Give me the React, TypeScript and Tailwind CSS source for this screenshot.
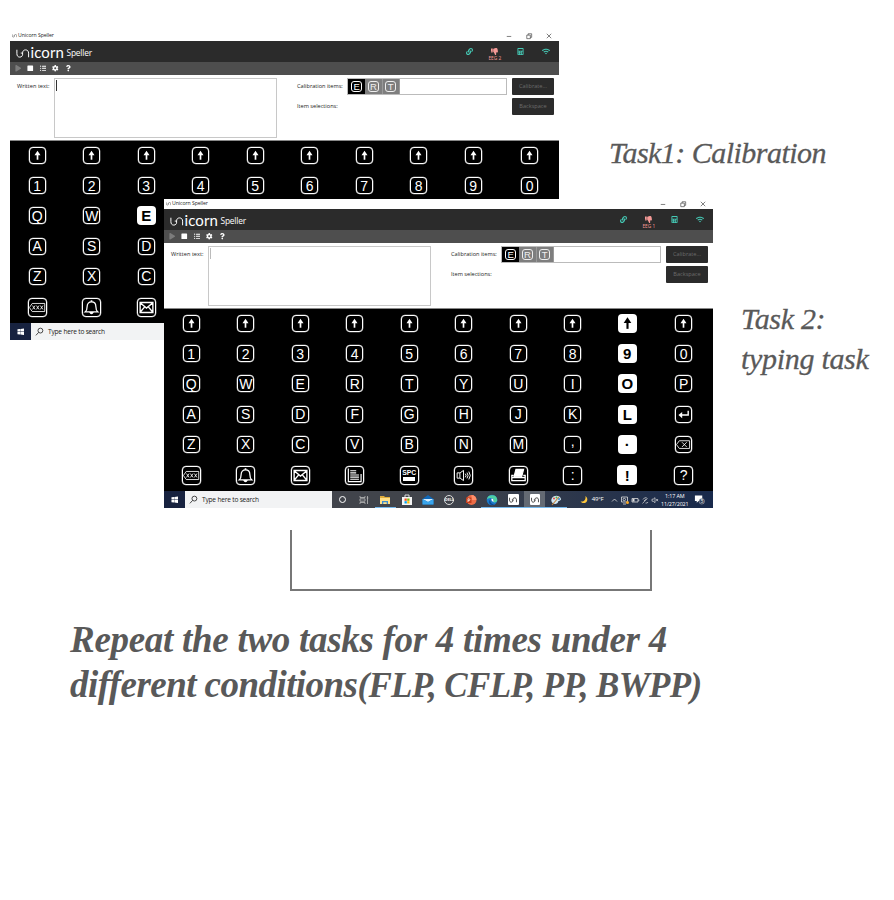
import React from "react";
import { FaLink, FaThumbsDown, FaCalculator, FaWifi, FaPlay, FaStop, FaListUl, FaCog, FaQuestion, FaWindows } from "react-icons/fa";

const rows: string[][] = [
  ["up", "up", "up", "up", "up", "up", "up", "up", "up", "up"],
  ["1", "2", "3", "4", "5", "6", "7", "8", "9", "0"],
  ["Q", "W", "E", "R", "T", "Y", "U", "I", "O", "P"],
  ["A", "S", "D", "F", "G", "H", "J", "K", "L", "enter"],
  ["Z", "X", "C", "V", "B", "N", "M", ",", "·", "del"],
  ["delall", "bell", "mail", "page", "spc", "sound", "print", ":", "!", "?"],
];

const rowHeights = ["h-[29.6px]", "h-[30.2px]", "h-[30.2px]", "h-[30.2px]", "h-[30.2px]", "h-[31.6px]"];

function Glyph({ name }: { name: string }) {
  const p = { viewBox: "1 1 16 16", className: "h-full w-full", fill: "none", stroke: "currentColor", strokeWidth: 1.1 };
  switch (name) {
    case "up":
      return <svg {...p}><path d="M9 3.8 5.8 8.6h6.4z" fill="currentColor" stroke="none" /><path d="M9 7.5v6" strokeWidth="1.8" /></svg>;
    case "enter":
      return <svg {...p}><path d="M14 5v4.6H6" strokeWidth="1.5" /><path d="M7.6 6.2v6.8L3.6 9.6z" fill="currentColor" stroke="none" /></svg>;
    case "del":
      return <svg {...p} strokeWidth={0.9}><path d="M4.5 5H15.5v8.2H4.5L1.5 9.1zM7.4 6.6l5 5M12.4 6.6l-5 5" /></svg>;
    case "delall":
      return <svg {...p} strokeWidth={0.8}><path d="M4 5.2H15.8v7.6H4L1.4 9zM4.3 7.2l2.4 3.6M6.7 7.2l-2.4 3.6M8 7.2l2.4 3.6M10.4 7.2 8 10.8M11.7 7.2l2.4 3.6M14.1 7.2l-2.4 3.6" /></svg>;
    case "bell":
      return <svg {...p} strokeWidth={1.2}><path d="M3 13.2C4.9 11.6 4.9 10.5 4.9 8c0-2.6 1.6-4.3 4.1-4.3s4.1 1.7 4.1 4.3c0 2.5 0 3.6 1.9 5.2z" /><path d="M9 2.2v1.5" strokeWidth="1.6" /><path d="M7.7 13.8a1.4 1.4 0 0 0 2.6 0z" fill="currentColor" /></svg>;
    case "mail":
      return <svg {...p} strokeWidth={1.3}><path d="M3 4.3h12v9.4H3zM3 4.6l6 5 6-5M3 13.4l4.3-5M15 13.4l-4.3-5" /></svg>;
    case "page":
      return <svg {...p}><path d="M3.2 2.5v12.2h12V7.5" /><path d="M5 4.5h5.6M5 6.5h5.6M5 8.5h8.2M5 10.5h8.2M5 12.5h8.2" /></svg>;
    case "sound":
      return <svg {...p}><path d="M3 6.5h2.6v5H3zM5.8 6.5 9 4.2v9.6l-3.2-2.3M10.7 7.3q1.4 1.7 0 3.4M12.3 6.3q2 2.7 0 5.4M14 5.3q2.8 3.7 0 7.4" strokeWidth="0.9" /></svg>;
    case "print":
      return <svg {...p}><path d="M6.6 3.2h7.2l-1.8 7H4.8z" fill="currentColor" /><path d="M4.5 9H2.7v4.9h12.6V9h-1.8M2.7 10.9h12.6" strokeWidth="1.2" /></svg>;
    case "spc":
      return (
        <span className="flex h-full w-full flex-col items-center justify-center gap-px">
          <span className="text-[6.8px] font-bold leading-[7px]">SPC</span>
          <span className="h-[4px] w-[12px] bg-white" />
        </span>
      );
    case ",":
      return <span className="pb-[7px]">,</span>;
    default:
      return <span>{name}</span>;
  }
}

function Key({ name, big, lit }: { name: string; big: boolean; lit: boolean }) {
  const size = lit ? (big ? "h-5 w-5" : "h-[19px] w-[19px]") : big ? "h-[19px] w-[19px]" : "h-[17px] w-[17px]";
  const tone = lit ? "bg-white text-black font-bold text-[15px]" : "bg-black text-white border border-white text-[14px] shadow-[0_0_0_0.3px_#ccc]";
  return (
    <span className={`flex shrink-0 items-center justify-center rounded-[4px] leading-none ${size} ${tone}`}>
      <Glyph name={name} />
    </span>
  );
}

function Mark({ className, w = 1 }: { className: string; w?: number }) {
  return (
    <svg viewBox="0 0 15 10" className={className} fill="none" stroke="currentColor" strokeWidth={w}>
      <path d="M1 .8V5.2C1 7.6 2.2 9 4.2 9S7.3 7.6 7.3 6.2M5.3 4.5h.6c1 0 1.4.7 1.4 1.7M7.3 6V4.4C7.3 2.3 8.6 1 10.6 1S14 2.3 14 4.6V9.2" />
    </svg>
  );
}

function TaskIcon({ name }: { name: string }) {
  const c = "h-[12px] w-[12px]";
  switch (name) {
    case "cortana":
      return <span className="h-[7px] w-[7px] rounded-full border border-white" />;
    case "view":
      return <svg viewBox="0 0 12 12" className={c} fill="none" stroke="#bbb" strokeWidth=".8"><path d="M2 2v1.5h5V2M2 10V8.5h5V10M2 4.8h5v2.4H2zM9.5 2v8M8.7 4h1.6" /></svg>;
    case "folder":
      return <svg viewBox="0 0 12 12" className={c}><path d="M1 2h4l1 1h5v7H1z" fill="#e0ad3c" /><path d="M1 4h10v6H1z" fill="#ffdf87" /><path d="M3 10V7h6v3H7.7V8.3H4.3V10z" fill="#3b8ed0" /></svg>;
    case "store":
      return <svg viewBox="0 0 12 12" className={c}><path d="M4 3V1h4v2" fill="none" stroke="#ddd" /><path d="M1 3h10v8H1z" fill="#f5f5f5" /><path d="M3.5 4.5h2.3v2.3H3.5z" fill="#f25022" /><path d="M6.2 4.5h2.3v2.3H6.2z" fill="#7fba00" /><path d="M3.5 7.2h2.3v2.3H3.5z" fill="#00a4ef" /><path d="M6.2 7.2h2.3v2.3H6.2z" fill="#ffb900" /></svg>;
    case "mail":
      return <svg viewBox="0 0 12 12" className={c}><path d="M.5 5 6 1l5.5 4v5.5H.5z" fill="#1068b8" /><path d="M.5 5h11L6 8z" fill="#d8efff" /><path d="M.5 5 6 8l5.5-3v5.5H.5z" fill="#39a5ec" /></svg>;
    case "dell":
      return <span className="flex h-[10px] w-[10px] items-center justify-center rounded-full border border-[#ddd] text-[3.6px] font-bold leading-none text-white">DELL</span>;
    case "ppt":
      return <svg viewBox="0 0 12 12" className={c}><circle cx="6.5" cy="6" r="5" fill="#ed6c47" /><path d="M6.5 6V1a5 5 0 0 1 5 5z" fill="#ff8f6b" /><path d="M1 3.5h5.5v5.5H1z" fill="#c43e1c" /><path d="M3 8V4.8h1a.8.8 0 0 1 0 1.8H3" stroke="#fff" strokeWidth=".7" fill="none" /></svg>;
    case "edge":
      return <svg viewBox="0 0 12 12" className={c}><circle cx="6" cy="6" r="5.3" fill="#1a78c8" /><path d="M.8 5.6A5.3 5.3 0 0 1 11.3 6c0 1.6-1.2 2.4-2.6 2.4-1.3 0-1.7-.7-1.3-1.4C8 5.2 6.5 3.9 4.5 4 2.7 4 1.4 4.8.8 5.6z" fill="#4fd1a3" /><path d="M4.4 5.3c-.8 2.2.8 5 3.9 5.1-4.2 2-7-2.3-3.9-5.1z" fill="#0c4a94" /><path d="M7.4 7c.3-1-.4-2.3-1.7-2.4-.9 1 .1 3.5 3.3 3.8-1.3 0-1.9-.6-1.6-1.4z" fill="#fff" /></svg>;
    case "unicorn":
      return <span className="flex h-[10.5px] w-[10.5px] items-center justify-center rounded-[1px] bg-white text-black"><Mark className="h-[6px] w-[8px]" w={1.3} /></span>;
    default:
      return <svg viewBox="0 0 12 12" className={c}><path d="M2 4c2-3 8-3 9 1 0 2-3 1.5-3 3s-3 3-5.5 1C1 7.5 1 5.5 2 4z" fill="#cfe6f2" /><circle cx="4" cy="4.5" r="1" fill="#e34b3e" /><circle cx="6.5" cy="3.5" r="1" fill="#58b147" /><circle cx="9" cy="5" r="1" fill="#3189d6" /><path d="m2 11 7-8" stroke="#c78339" strokeWidth="1.1" /></svg>;
  }
}

const tasks = ["cortana", "view", "folder", "store", "mail", "dell", "ppt", "edge", "unicorn", "unicorn", "paint"];

function Taskbar() {
  return (
    <div className="flex h-[17px] shrink-0 items-stretch bg-linear-to-r from-[#41444b] from-50% to-[#18294b]">
      <div className="flex w-[21px] shrink-0 items-center justify-center bg-[#17223f] text-white"><FaWindows className="h-[7.5px] w-[7.5px]" /></div>
      <div className="flex w-[147px] shrink-0 items-center bg-[#f2f3f4] pl-[4px] text-[#222]">
        <svg viewBox="0 0 10 10" className="h-[9px] w-[9px]" fill="none" stroke="#222" strokeWidth=".9"><circle cx="6" cy="4" r="2.7" /><path d="m4 6-3 3.3" /></svg>
        <span className="ml-[4px] whitespace-nowrap text-[6.6px] tracking-[-0.2px]">Type here to search</span>
      </div>
      {tasks.map((t, i) => (
        <div key={i} className={`flex w-[21.35px] shrink-0 items-center justify-center ${i === 2 || i > 6 ? "shadow-[inset_0_-1px_0_#76b9ed]" : ""} ${i === 9 ? "bg-[#646a73]" : ""}`}>
          <TaskIcon name={t} />
        </div>
      ))}
      <div className="flex flex-1 items-center pl-[13px] text-white">
        <svg viewBox="0 0 10 10" className="h-[9px] w-[9px] shrink-0"><path d="M6 1c4 3 2 8-2 8C2.5 9 1 8 .7 7.2 4 8 7 5 6 1z" fill="#ffc83d" /></svg>
        <span className="ml-[3px] w-[14px] text-[6px] font-medium tracking-[-0.2px]">49°F</span>
        <svg viewBox="0 0 50 10" className="ml-[4px] h-[10px] w-[50px] shrink-0" fill="none" stroke="#ddd" strokeWidth=".8">
          <path d="m2 6.5 2.5-2.5L7 6.5" />
          <path d="M11.5 2h6v5h-6zM13 9h3" /><circle cx="14.3" cy="4.5" r="1.2" /><circle cx="17.5" cy="7.5" r="1.5" fill="#f5a623" stroke="none" />
          <path d="M22 3.5h6v3.5h-6zM28.8 4.5v1.5" /><path d="M22.5 4h2v2.5h-2z" fill="#ddd" stroke="none" />
          <path d="M32.5 8.5 37.5 3M33 4.5q1-2 3.5-2M34 6q1-1.5 2.5-1.5M35.5 8q2 .5 2.5-1" strokeWidth=".7" />
          <path d="M42 4.2h1.2L45 2.7v5L43.2 6.2H42zM46.2 4l1.8 2.2M48 4l-1.8 2.2" strokeWidth=".7" />
        </svg>
        <span className="flex w-[30px] flex-col items-center whitespace-nowrap text-[5.4px] leading-[8px] tracking-[-0.1px]">
          <span>1:17 AM</span>
          <span>11/27/2021</span>
        </span>
        <svg viewBox="0 0 12 12" className="ml-[4px] h-[11px] w-[11px] shrink-0"><path d="M1 1.5h8v6H5L3 9.5v-2H1z" fill="#fff" /><circle cx="8.5" cy="8" r="3" fill="#35415a" stroke="#ccc" strokeWidth=".5" /><text x="7.3" y="9.9" fontSize="5" fill="#fff">5</text></svg>
      </div>
    </div>
  );
}

function Speller({ eeg, isLit, caret }: { eeg: string; isLit: (r: number, c: number) => boolean; caret: string }) {
  return (
    <div className="flex h-[309px] w-[549px] flex-col bg-white font-['Open_Sans','Noto_Sans',sans-serif] text-[#222]">
      <div className="flex h-[10px] shrink-0 items-center">
        <Mark className="ml-[1.5px] h-[3.5px] w-[5px]" w={1.2} />
        <span className="ml-[1.5px] whitespace-nowrap text-[5.2px] leading-none tracking-[-0.08px]">Unicorn Speller</span>
        <div className="ml-auto flex text-[#333]">
          {["M2 5h5", "M2 3.5h4v4H2zM3.5 3.5V2h4v4H6", "m2 2 5 5M7 2 2 7"].map((d) => (
            <span key={d} className="flex w-5 justify-center"><svg viewBox="0 0 9 9" className="h-[8px] w-[8px]" fill="none" stroke="currentColor" strokeWidth=".7"><path d={d} /></svg></span>
          ))}
        </div>
      </div>
      <div className="flex h-[21px] shrink-0 items-center bg-[#2b2b2b] text-white">
        <Mark className="mt-[3px] ml-[6px] h-[9px] w-[13.5px]" w={1.1} />
        <span className="mt-[2px] ml-px w-[32px] whitespace-nowrap font-[Lato] text-[15px] leading-none font-normal tracking-[0.1px]">icorn</span>
        <span className="mt-[4px] ml-[4px] text-[8.4px] leading-none tracking-[-0.2px]">Speller</span>
        <div className="ml-auto flex items-start text-[#45c9b5]">
          <span className="flex w-[25.7px] justify-center"><FaLink className="h-[7px] w-[7px]" /></span>
          <span className="flex h-[7px] w-[25.7px] flex-col items-center text-[#f59a97]"><FaThumbsDown className="h-[7px] w-[7px] shrink-0" /><span className="text-[4.8px] leading-[6px]">{eeg}</span></span>
          <span className="flex w-[25.7px] justify-center"><FaCalculator className="h-[7px] w-[7px]" /></span>
          <span className="flex w-[25.7px] justify-center"><FaWifi className="h-[7px] w-[8px]" /></span>
        </div>
      </div>
      <div className="flex h-[13px] shrink-0 items-center bg-[#4e4e4e] pl-[2px] text-white">
        {[FaPlay, FaStop, FaListUl, FaCog, FaQuestion].map((I, i) => (
          <span key={i} className={`flex w-[12.4px] justify-center ${i === 0 ? "text-[#7c7c7c]" : ""}`}><I className="h-[6.5px] w-[6.5px]" /></span>
        ))}
      </div>
      <div className="flex h-[66px] shrink-0 items-start border-b border-[#888] pt-[3px] text-[5.6px] leading-[8px]">
        <span className="w-[44px] whitespace-nowrap pt-[4px] pl-[7px]">Written text:</span>
        <div className="h-[60px] w-[223px] border border-[#c8c8c8] p-px"><div className={`h-[11px] w-px ${caret}`} /></div>
        <div className="ml-[20px] flex w-[50px] flex-col gap-[12px] whitespace-nowrap pt-[4px]">
          <span>Calibration items:</span>
          <span>Item selections:</span>
        </div>
        <div className="flex h-[17px] w-[160px] border border-[#bbb] font-['Liberation_Sans',sans-serif] text-[9.5px] leading-none text-white">
          {["E", "R", "T"].map((k, i) => (
            <span key={k} className={`flex w-[17.3px] items-center justify-center ${i === 0 ? "bg-black" : "border-r border-[#999] bg-[#7e7e7e] text-[#eee]"}`}>
              <span className="flex h-[11px] w-[11px] items-center justify-center rounded-[3px] border border-current">{k}</span>
            </span>
          ))}
        </div>
        <div className="ml-[5px] flex flex-col gap-[3px] text-center text-[#6c6c6c]">
          <span className="h-[17px] w-[42px] rounded-[1px] bg-[#2b2b2b] leading-[17px]">Calibrate...</span>
          <span className="h-[17px] w-[42px] rounded-[1px] bg-[#2b2b2b] leading-[17px]">Backspace</span>
        </div>
      </div>
      <div className="flex h-[182px] shrink-0 flex-col bg-black font-['Liberation_Sans',sans-serif]">
        {rows.map((row, r) => (
          <div key={r} className={`grid w-full shrink-0 grid-cols-[repeat(9,54.5px)_1fr] place-items-center ${rowHeights[r]}`}>
            {row.map((k, c) => <Key key={c} name={k} big={r === 5} lit={isLit(r, c)} />)}
          </div>
        ))}
      </div>
      <Taskbar />
    </div>
  );
}

export default function App() {
  return (
    <main className="relative h-[900px] w-[894px] overflow-hidden bg-white font-['Liberation_Serif',serif] text-[#595959] italic">
      <div className="absolute top-[31px] left-[10px] not-italic">
        <Speller eeg="EEG 2" caret="bg-[#333]" isLit={(r, c) => r === 2 && c === 2} />
      </div>
      <div className="absolute top-[199px] left-[164px] not-italic">
        <Speller eeg="EEG 1" caret="bg-[#bbb]" isLit={(_, c) => c === 8} />
      </div>
      <p className="absolute top-[133px] left-[609px] whitespace-nowrap text-[30px] leading-[40px] tracking-[-0.52px] [-webkit-text-stroke:0.3px]">Task1: Calibration</p>
      <p className="absolute top-[299px] left-[741px] whitespace-nowrap text-[30px] leading-[40px] tracking-[-0.3px] [-webkit-text-stroke:0.3px]">Task 2:<br />typing task</p>
      <div className="absolute top-[530px] left-[290px] h-[61px] w-[362px] border-2 border-t-0 border-[#777]" />
      <p className="absolute top-[617px] left-[70px] whitespace-nowrap text-[37px] leading-[45px] font-bold">
        <span className="tracking-[-0.29px]">Repeat the two tasks for 4 times under 4</span>
        <br />
        <span className="tracking-[-0.55px]">different conditions</span>
        <span className="text-[35px] tracking-[-0.65px]">(FLP, CFLP, PP, BWPP)</span>
      </p>
    </main>
  );
}
